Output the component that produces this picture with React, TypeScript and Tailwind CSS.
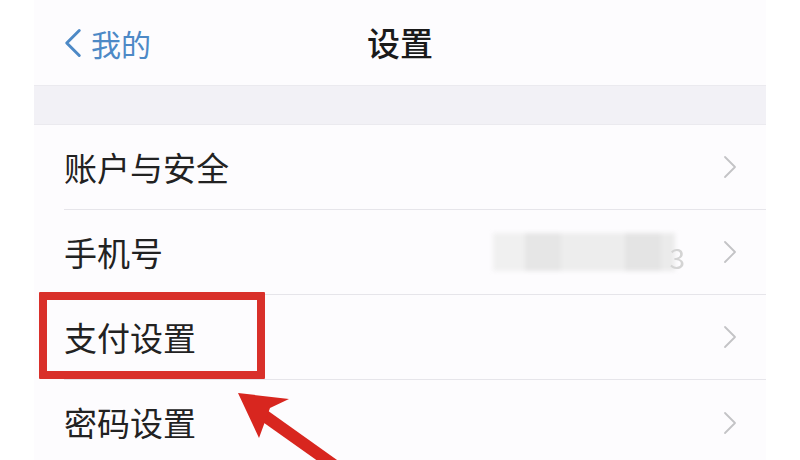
const rows = ['账户与安全', '手机号', '支付设置', '密码设置']

function Chevron({ dir, className }: { dir: 'left' | 'right'; className: string }) {
  return (
    <svg className={className} viewBox="0 0 14 24" fill="none" stroke="currentColor" strokeLinecap="round" strokeLinejoin="round">
      {dir === 'left' ? (
        <polyline points="12,2 2,12 12,22" strokeWidth="2.4" />
      ) : (
        <polyline points="2,2 12,12 2,22" strokeWidth="1.8" />
      )}
    </svg>
  )
}

// 手机号的打码区域
function BlurredPhone() {
  return (
    <div className="flex items-center mr-[38px]">
      <div className="flex h-[38px] blur-[2px]">
        <div className="w-[32px] bg-[#f0f0f0]" />
        <div className="w-[36px] bg-[#e6e6e6]" />
        <div className="w-[64px] bg-[#ededed]" />
        <div className="w-[36px] bg-[#e4e4e4]" />
        <div className="w-[14px] bg-[#ebebeb]" />
      </div>
      <span className="text-[28px] leading-none text-[#d4d4d4] ml-[-6px] mt-[10px] blur-[0.6px]">3</span>
    </div>
  )
}

export default function App() {
  return (
    <div
      className="relative w-[800px] h-[460px] overflow-hidden bg-white flex"
      style={{ fontFamily: '"Noto Sans CJK SC", "Noto Sans", sans-serif' }}
    >
      <div className="ml-[34px] w-[732px] h-full bg-[#fdfcfe] flex flex-col">
        {/* 导航栏 */}
        <div className="relative h-[85px] flex items-center justify-center shrink-0">
          <div className="absolute left-[30px] top-0 h-full flex items-center text-[#4d89c6]">
            <Chevron dir="left" className="w-[18px] h-[30px]" />
            <span className="text-[30px] leading-none ml-[9px]">我的</span>
          </div>
          <span className="text-[33px] leading-none font-medium text-[#1a1a1a]">设置</span>
        </div>

        <div className="h-[40px] bg-[#f2f1f6] shrink-0 border-y border-[#ebeaef]" />

        {/* 设置列表 */}
        {rows.map((label, i) => (
          <div key={label} className="h-[85px] shrink-0 pl-[30px]">
            <div
              className={`h-full flex items-center justify-between pr-[29px] ${
                i < rows.length - 1 ? 'border-b border-[#e6e5ea]' : ''
              }`}
            >
              <span className="text-[33px] leading-none text-[#222222]">{label}</span>
              <div className="flex items-center">
                {label === '手机号' && <BlurredPhone />}
                <Chevron dir="right" className="w-[14px] h-[24px] text-[#c3c3c6]" />
              </div>
            </div>
          </div>
        ))}
      </div>

      {/* 红框标注 */}
      <div className="absolute left-[39px] top-[292px] w-[226px] h-[87px] border-[8px] border-[#d9302a] rounded-[1px]" />

      {/* 红色箭头 */}
      <svg className="absolute left-0 top-0" width="800" height="460" viewBox="0 0 800 460">
        <line x1="262" y1="414" x2="352" y2="478" stroke="#d8261f" strokeWidth="12" />
        <polygon points="238,393 289,399 270,408 259,438" fill="#d8261f" />
      </svg>
    </div>
  )
}
